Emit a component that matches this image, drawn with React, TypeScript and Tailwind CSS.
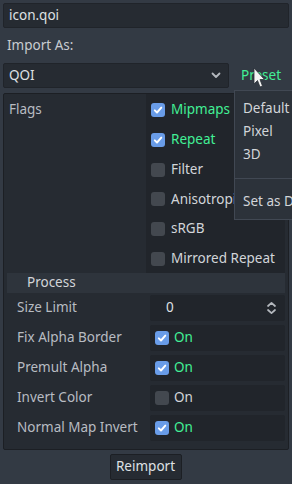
import React from 'react';

interface FlagItem {
  label: string;
  on: boolean;
}

interface BoolRow {
  label: string;
  on: boolean;
}

const Check: React.FC<{ on: boolean }> = ({ on }) =>
  on ? (
    <span className="w-[14px] h-[14px] shrink-0 rounded-[3px] bg-[#699ce8] flex items-center justify-center">
      <svg width="10" height="10" viewBox="0 0 10 10">
        <path d="M1.8 5.3 L4 7.5 L8.3 2.6" stroke="white" strokeWidth="1.9" fill="none" strokeLinecap="round" strokeLinejoin="round" />
      </svg>
    </span>
  ) : (
    <span className="w-[14px] h-[14px] shrink-0 rounded-[3px] bg-[#43484f]" />
  );

const App: React.FC = () => {
  const flags: FlagItem[] = [
    { label: 'Mipmaps', on: true },
    { label: 'Repeat', on: true },
    { label: 'Filter', on: false },
    { label: 'Anisotropic', on: false },
    { label: 'sRGB', on: false },
    { label: 'Mirrored Repeat', on: false },
  ];

  const rows: BoolRow[] = [
    { label: 'Fix Alpha Border', on: true },
    { label: 'Premult Alpha', on: true },
    { label: 'Invert Color', on: false },
    { label: 'Normal Map Invert', on: true },
  ];

  return (
    <div className="relative w-[292px] h-[484px] overflow-hidden bg-[#333a44] p-[3px] flex flex-col font-['Noto_Sans',sans-serif] text-[13.5px] text-[#dfe1e4] leading-none">
      {/* file name */}
      <div className="h-[25px] bg-[#262b32] border border-[#20242a] rounded-[2px] px-[5px] flex items-center">icon.qoi</div>

      <div className="h-[35px] flex items-center px-[4px] text-[#c9ccd1]">Import As:</div>

      <div className="h-[25px] flex">
        <div className="w-[226px] bg-[#262b32] border border-[#20242a] rounded-[2px] pl-[5px] pr-[7px] flex items-center justify-between">
          <span>QOI</span>
          <svg width="10" height="7" viewBox="0 0 10 7">
            <path d="M1.5 1.5 L5 5 L8.5 1.5" stroke="#b4b8be" strokeWidth="1.8" fill="none" strokeLinecap="round" strokeLinejoin="round" />
          </svg>
        </div>
        <div className="flex-1 flex items-center pl-[12px] text-[#42f096]">Preset</div>
      </div>

      {/* inspector */}
      <div className="mt-[5px] h-[357px] bg-[#262b32] border border-[#1c1f24] rounded-[2px] flex flex-col pr-[3px]">
        <div className="flex">
          <div className="w-[142px] pl-[5px] pt-[9px] text-[#b8bcc2]">Flags</div>
          <div className="flex-1 h-[179px] bg-[#21252b] pt-[2px] pl-[5px] flex flex-col gap-[2px]">
            {flags.map((f) => (
              <div key={f.label} className="h-[28px] flex items-center gap-[6px] whitespace-nowrap">
                <Check on={f.on} />
                <span className={f.on ? 'text-[#42f096]' : 'text-[#d2d5d9]'}>{f.label}</span>
              </div>
            ))}
          </div>
        </div>

        <div className="ml-[3px] h-[20px] bg-[#2e343c] flex items-center pl-[20px] text-[#d2d5d9]">Process</div>

        <div className="ml-[3px] h-[30px] flex items-center">
          <div className="w-[143px] pl-[10px] text-[#b8bcc2]">Size Limit</div>
          <div className="flex-1 h-[26px] bg-[#21252b] rounded-[2px] flex items-center justify-between pl-[16px] pr-[8px]">
            <span>0</span>
            <svg width="11" height="14" viewBox="0 0 11 14">
              <path d="M2 5 L5.5 1.8 L9 5 M2 9 L5.5 12.2 L9 9" stroke="#b4b8be" strokeWidth="1.7" fill="none" strokeLinecap="round" strokeLinejoin="round" />
            </svg>
          </div>
        </div>

        {rows.map((r) => (
          <div key={r.label} className="ml-[3px] h-[30px] flex items-center">
            <div className="w-[143px] pl-[10px] text-[#b8bcc2] whitespace-nowrap">{r.label}</div>
            <div className="flex-1 h-[26px] bg-[#21252b] rounded-[2px] flex items-center gap-[5px] pl-[5px]">
              <Check on={r.on} />
              <span className={r.on ? 'text-[#42f096]' : 'text-[#d2d5d9]'}>On</span>
            </div>
          </div>
        ))}
      </div>

      <div className="mt-[4px] flex justify-center">
        <button className="ml-[-1px] w-[72px] h-[26px] bg-[#262b32] border border-[#1c1f24] rounded-[2px] text-[#dfe1e4]">Reimport</button>
      </div>

      {/* preset popup */}
      <div className="absolute left-[234px] top-[90px] w-[110px] h-[130px] bg-[#2c323a] border border-[#414853] pt-[6px] text-[#d2d5d9] flex flex-col">
        <div className="h-[23px] flex items-center pl-[8px]">Default</div>
        <div className="h-[23px] flex items-center pl-[8px]">Pixel</div>
        <div className="h-[23px] flex items-center pl-[8px]">3D</div>
        <div className="h-[24px] flex items-center">
          <div className="w-full h-px bg-[#414853]" />
        </div>
        <div className="h-[23px] flex items-center pl-[8px] whitespace-nowrap">Set as Default</div>
      </div>

      {/* mouse cursor */}
      <svg className="absolute left-[253px] top-[67px]" width="12" height="22" viewBox="0 0 12 22">
        <path d="M1 1 L1 17 L4.5 13.5 L7 20 L9.5 19 L7 12.5 L11.5 12.5 Z" fill="#f4f4f4" stroke="#2a2f36" strokeWidth="0.8" strokeLinejoin="round" />
      </svg>
    </div>
  );
};

export default App;
